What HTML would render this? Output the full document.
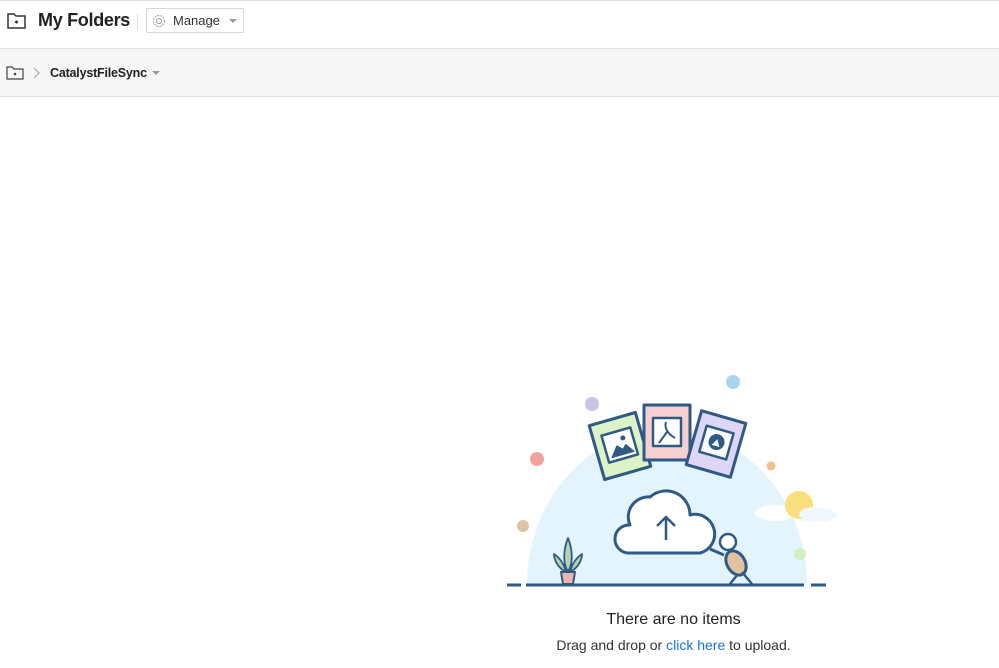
<!DOCTYPE html>
<html><head><style>
body{margin:0;width:999px;height:668px;overflow:hidden;background:#fff;font-family:"Liberation Sans",sans-serif;position:relative}
.top{position:absolute;left:0;top:0;width:999px;height:49px;border-top:1px solid #ddd;border-bottom:1px solid #e3e3e3;box-sizing:border-box}
.bar{position:absolute;left:0;top:49px;width:999px;height:48px;background:#f7f7f7;border-bottom:1px solid #e3e3e3;box-sizing:border-box}
.t{position:absolute;left:38px;top:9px;font-size:18px;font-weight:bold;color:#222;letter-spacing:-0.3px}
.sep{position:absolute;left:137px;top:13px;width:1px;height:16px;background:#ddd}
.btn{position:absolute;left:146px;top:7px;width:98px;height:25px;border:1px solid #d6d6d6;border-radius:2px;box-sizing:border-box;background:#fff}
.btn span{position:absolute;left:26px;top:4px;font-size:13px;color:#333}
.crumb{position:absolute;left:50px;font-size:12.5px;font-weight:bold;color:#222;letter-spacing:-0.2px}
.msg1{position:absolute;left:0;width:1347px;text-align:center;top:611px;font-size:16px;color:#222}
.msg2{position:absolute;left:0;width:1347px;text-align:center;top:637px;font-size:14px;color:#333}
.msg2 a{color:#1a73e8;text-decoration:none}
</style></head><body>
<div class="top">
<svg style="position:absolute;left:7px;top:12px" width="19" height="16" viewBox="0 0 19 16"><path d="M1 1h6l2 2h9v12H1z" fill="none" stroke="#333" stroke-width="1.5"/><circle cx="9.5" cy="9" r="1.5" fill="#333"/></svg>
<div class="t">My Folders</div><div class="sep"></div>
<div class="btn"><svg style="position:absolute;left:5px;top:5px" width="14" height="14" viewBox="0 0 14 14"><circle cx="7" cy="7" r="5.5" fill="none" stroke="#999" stroke-width="1" stroke-dasharray="2 1"/><circle cx="7" cy="7" r="2.5" fill="none" stroke="#999"/></svg><span>Manage</span><svg style="position:absolute;left:82px;top:10px" width="8" height="5"><path d="M0 0h8L4 4z" fill="#999"/></svg></div>
</div>
<div class="bar">
<svg style="position:absolute;left:6px;top:17px" width="18" height="14" viewBox="0 0 18 14"><path d="M1 1h5l2 2h9v10H1z" fill="none" stroke="#444" stroke-width="1.2"/><circle cx="9" cy="8" r="1.3" fill="#444"/></svg>
<svg style="position:absolute;left:33px;top:18px" width="7" height="12"><path d="M1 1l5 5-5 5" fill="none" stroke="#aaa" stroke-width="1.2"/></svg>
<div class="crumb" style="top:17px">CatalystFileSync</div>
<svg style="position:absolute;left:152px;top:22px" width="8" height="5"><path d="M0 0h8L4 4z" fill="#999"/></svg>
</div>
<svg style="position:absolute;left:0;top:0" width="999" height="668">
<path d="M527 585A140 155 0 0 1 807 585Z" fill="#e4f4fd"/>
<circle cx="733" cy="382" r="7" fill="#a9d3ee"/><circle cx="592" cy="404" r="7" fill="#cbc4e3"/><circle cx="537" cy="459" r="7" fill="#f2a49c"/><circle cx="771" cy="466" r="4.5" fill="#f6c08c"/><circle cx="523" cy="526" r="6" fill="#e0c2a4"/><circle cx="800" cy="554" r="6" fill="#d4eec4"/>
<ellipse cx="775" cy="513" rx="20" ry="8" fill="#fff"/><ellipse cx="815" cy="515" rx="22" ry="7" fill="#eef7fd"/><circle cx="799" cy="505" r="14" fill="#fbdf7e"/><ellipse cx="815" cy="514" rx="16" ry="7" fill="#f1f8fd"/>
<g stroke="#2f5a86" stroke-width="3" stroke-linejoin="round">
<g transform="rotate(-16 620 446)"><rect x="596" y="418" width="48" height="56" fill="#dcf2c7"/><rect x="605" y="431" width="30" height="28" fill="#fff" stroke-width="2.5"/><path d="M609 455l8-10 5 5 4-4 6 9z" fill="#2f5a86" stroke-width="1"/><circle cx="625" cy="439" r="2.5" fill="#2f5a86" stroke="none"/></g>
<rect x="644" y="405" width="46" height="55" fill="#f6cfd0"/><rect x="653" y="418" width="28" height="28" fill="#fff" stroke-width="2.5"/><path d="M666 422c-2 6 2 12 9 16M667 432l-8 11" fill="none" stroke-width="2"/>
<g transform="rotate(16 716 444)"><rect x="693" y="416" width="46" height="56" fill="#ddd6f6"/><rect x="702" y="429" width="28" height="27" fill="#fff" stroke-width="2.5"/><circle cx="716" cy="442" r="8" fill="#2f5a86" stroke="none"/><path d="M712 446l4-7 4 7z" fill="#fff" stroke="none"/></g>
<path d="M628 553a14 14 0 0 1 2-28a20 20 0 0 1 20-28a24 24 0 0 1 40 18a18 18 0 0 1 10 38z" fill="#fff"/>
<path d="M666 540v-22M657 526l9-9 9 9" fill="none" stroke-width="2.5"/>
<path d="M710 549l14 6" fill="none"/>
<circle cx="728" cy="542" r="8" fill="#fff" stroke-width="2.5"/>
<ellipse cx="736" cy="563" rx="9" ry="13" transform="rotate(-30 736 563)" fill="#e3c2a0"/>
<path d="M738 574l-8 10M742 572l10 12" fill="none" stroke-width="2.5"/>
<path d="M561 572h14l-2 12h-10z" fill="#f2b3ac" stroke-width="2"/>
<path d="M568 572c-6-10-4-24 0-34c4 10 6 24 0 34zM566 572c-8-4-12-12-12-18c6 4 10 10 12 18zM570 572c8-4 12-12 12-18c-6 4-10 10-12 18z" fill="#b6d4ad" stroke-width="1.8"/>
<path d="M507 585h14M526 585h278M811 585h15" fill="none" stroke-width="3"/>
</g>
</svg>
<div class="msg1">There are no items</div>
<div class="msg2">Drag and drop or <a>click here</a> to upload.</div>
</body></html>
